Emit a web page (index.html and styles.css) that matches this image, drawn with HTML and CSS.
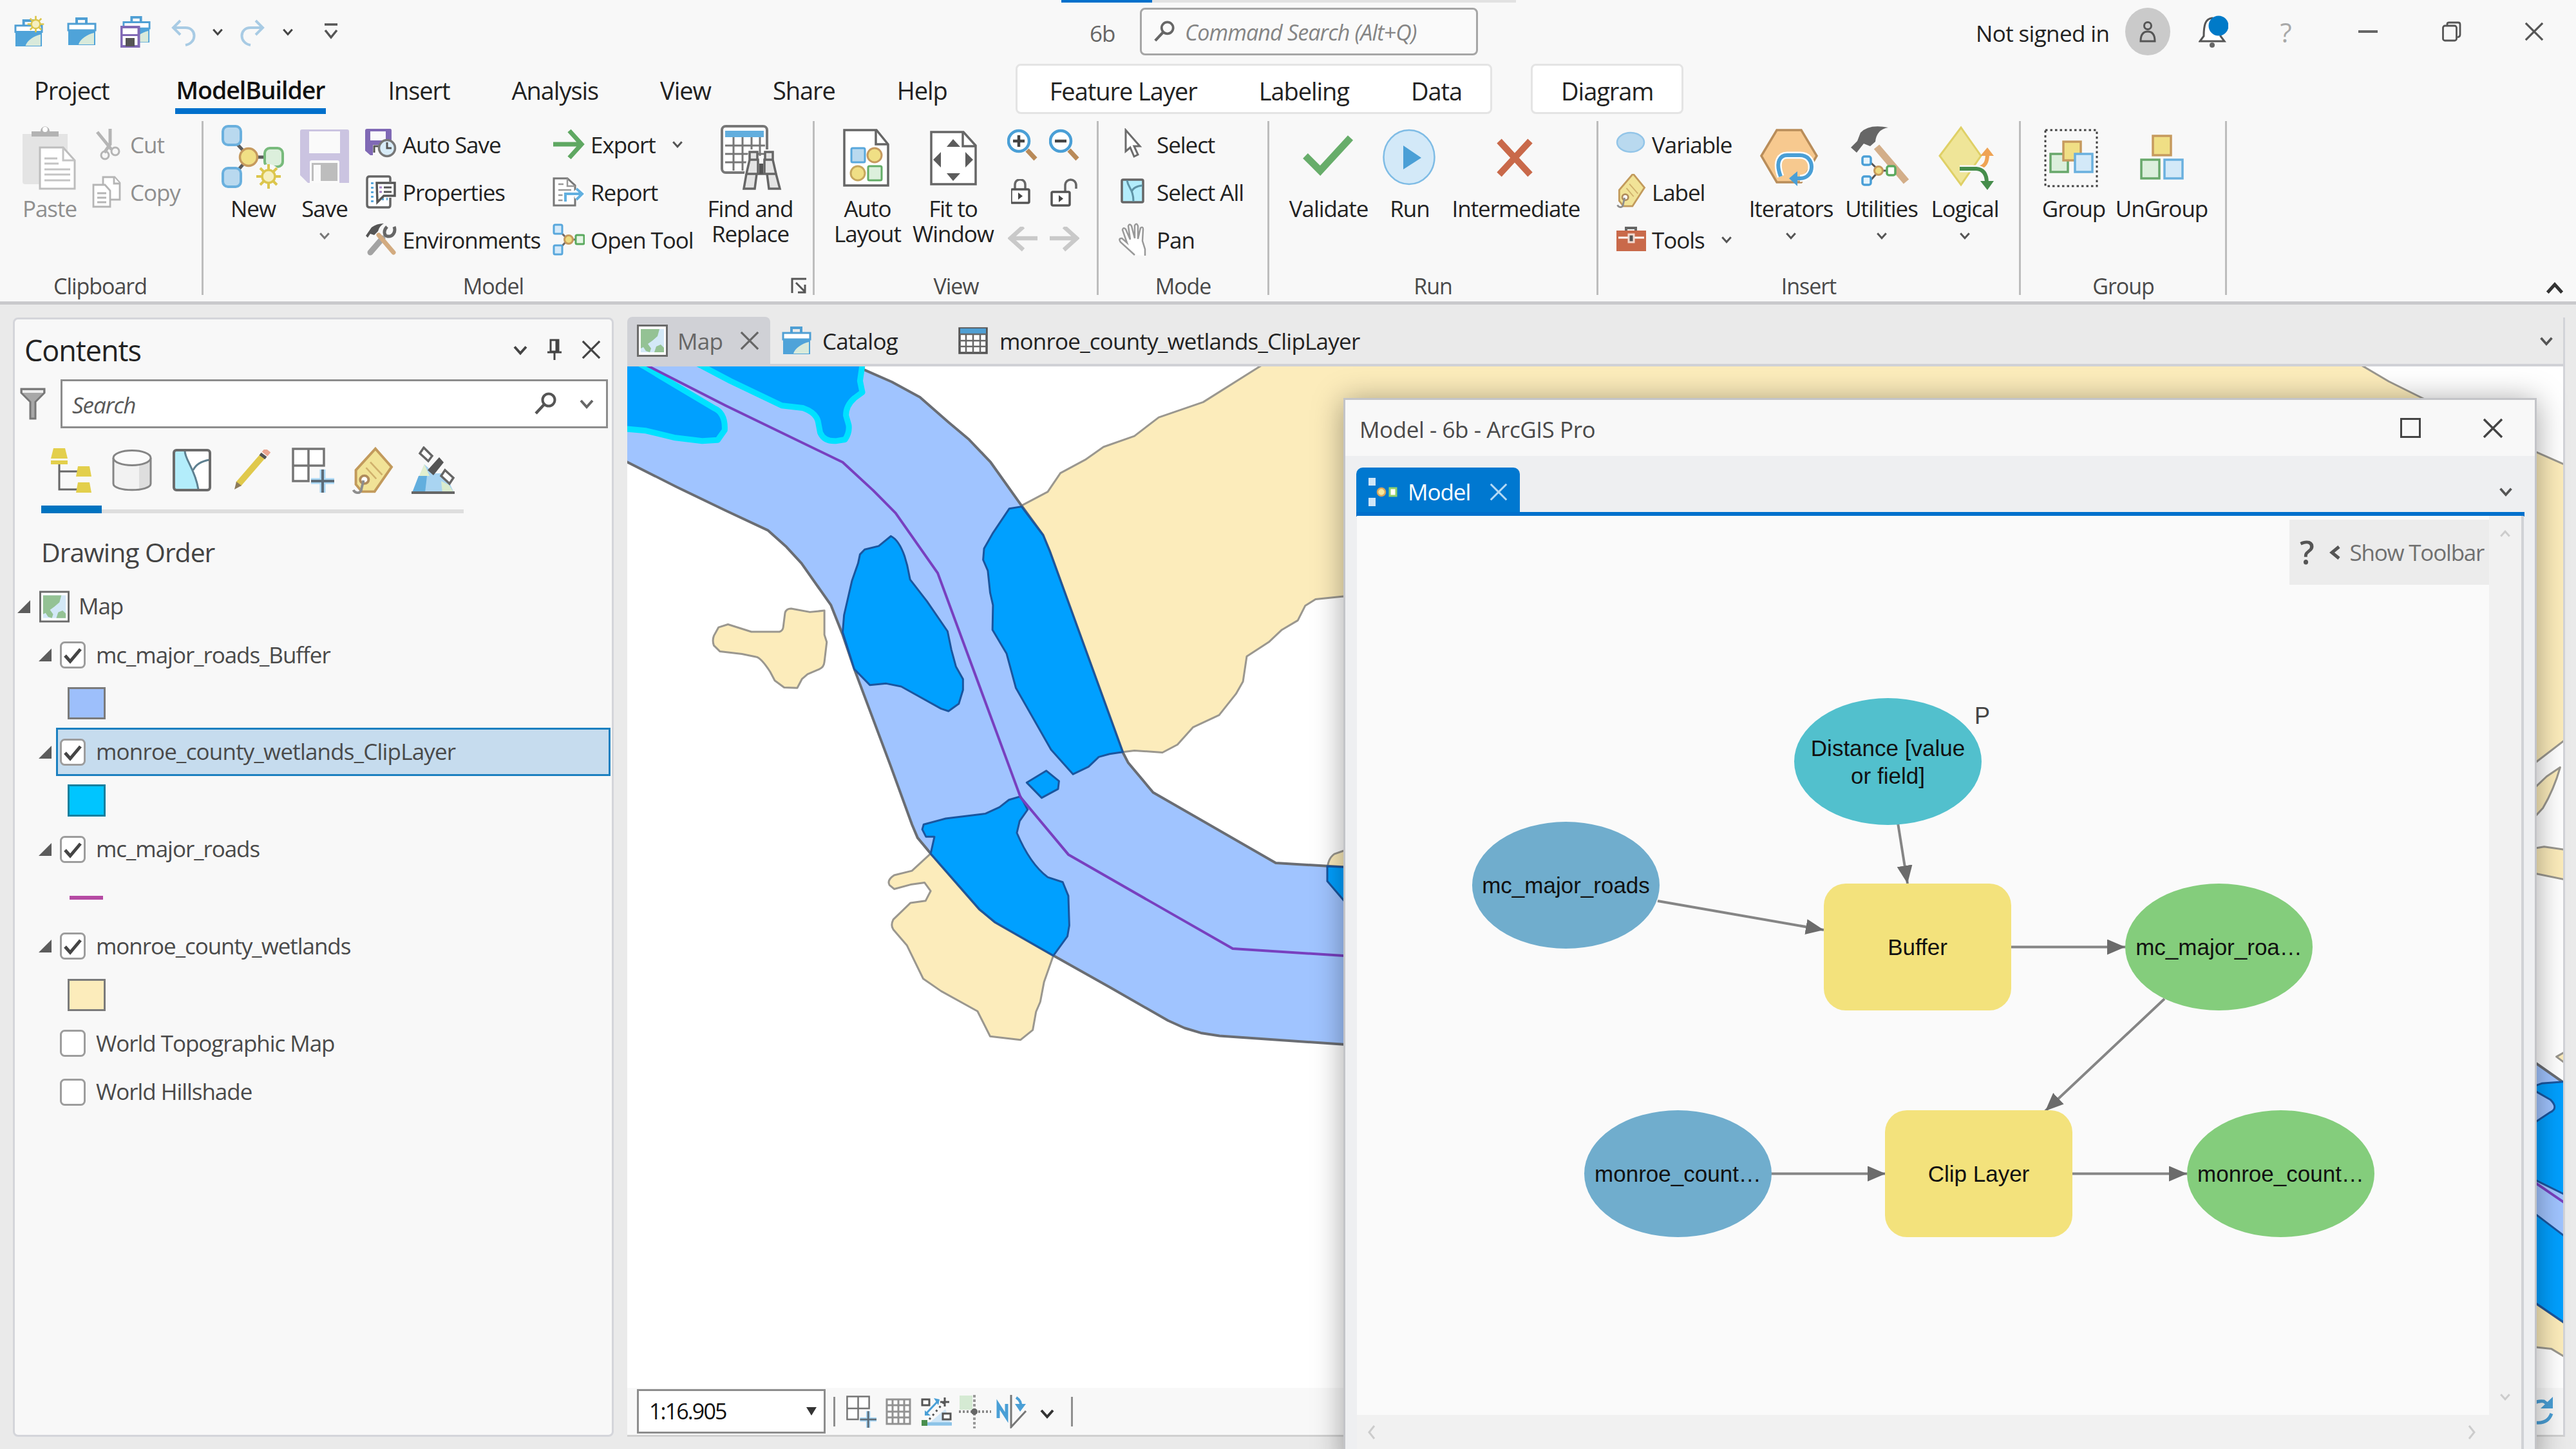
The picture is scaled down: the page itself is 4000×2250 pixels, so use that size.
FILE: index.html
```html
<!DOCTYPE html>
<html lang="en">
<head>
<meta charset="utf-8">
<title>6b - ArcGIS Pro</title>
<link rel="stylesheet" href="styles.css">
</head>
<body>
<svg class="defs" aria-hidden="true">
  <defs>
    <symbol id="chev" viewBox="0 0 24 16"><path d="M3 3l9 10 9-10" fill="none" stroke="currentColor" stroke-width="4"/></symbol>
    <symbol id="cross" viewBox="0 0 32 32"><path d="M2 2l28 28M30 2L2 30" fill="none" stroke="currentColor" stroke-width="3.4"/></symbol>
    <symbol id="lens" viewBox="0 0 36 36"><circle cx="23" cy="12" r="9.500" fill="none" stroke="currentColor" stroke-width="4"/><path d="M16 19L3 33" stroke="currentColor" stroke-width="4.500"/></symbol>
    <symbol id="sun" viewBox="0 0 40 40"><path d="M20 1v38M1 20h38M7 7l26 26M33 7L7 33" stroke="#dcc64d" stroke-width="4"/><circle cx="20" cy="20" r="10" fill="#f5efc0" stroke="#dcc64d" stroke-width="3.500"/></symbol>
    <symbol id="tree" viewBox="0 0 20 20"><path d="M20 0v20H0z" fill="#5c5c5c"/></symbol>
    <symbol id="maptile" viewBox="0 0 48 50"><rect x="1.500" y="1.500" width="45" height="47" fill="#fff" stroke="#6b6b6b" stroke-width="3"/><rect x="6" y="7" width="36" height="36" fill="#d3e8f7"/><path d="M6 7h29l-3 11-8 7-7 5 5 7-2 6-6-2-4-6-4 2z" fill="#94c294"/><path d="M27 43l3-9 7-3 5 5v7z" fill="#94c294"/></symbol>
    <symbol id="case" viewBox="0 0 46 46"><path d="M15 12V3h15v9" fill="none" stroke="#4f9fd4" stroke-width="4"/><path d="M2 11h42v10H2z" fill="#fff" stroke="#4f9fd4" stroke-width="3"/><path d="M2 20h42v24H2z" fill="#4fa3d9"/><path d="M18 43c2-8 14-16 24-18v18z" fill="#d9eadb"/></symbol>
    <symbol id="nodes" viewBox="0 0 50 50"><path d="M8 9l16 16L8 42M26 25h14" fill="none" stroke="#6b6b6b" stroke-width="3"/><rect x="2" y="2" width="13" height="14" rx="2" fill="#d5eafa" stroke="#58a7dc" stroke-width="3"/><rect x="2" y="34" width="13" height="14" rx="2" fill="#d5eafa" stroke="#58a7dc" stroke-width="3"/><circle cx="25" cy="25" r="6.500" fill="#eddc80" stroke="#c79a5c" stroke-width="3"/><rect x="36" y="18" width="13" height="14" rx="2" fill="#e6f5e6" stroke="#5aa95e" stroke-width="3"/></symbol>
    <symbol id="tag" viewBox="0 0 50 60"><path d="M28 3l19 23-20 31H12L5 48V30z" fill="#f1e397" stroke="#c29a5c" stroke-width="3"/><circle cx="15" cy="42" r="5" fill="#fff" stroke="#b08c5c" stroke-width="3"/><path d="M22 20l14 16M17 27l12 14" stroke="#d0b06c" stroke-width="2"/><path d="M14 43l-3 13c-2 4-7 3-9-1" fill="none" stroke="#8d8d8d" stroke-width="3"/></symbol>
    <symbol id="gridplus" viewBox="0 0 66 70"><path d="M2 2h48v26H2zM26 2v50H2V2M2 28h48" fill="#fff" stroke="#757575" stroke-width="3.500"/><path d="M48 34v36M30 52h36" stroke="#a9d7f5" stroke-width="9"/><path d="M48 34v36M30 52h36" stroke="#5d6c78" stroke-width="4"/></symbol>
    <symbol id="check" viewBox="0 0 40 42"><rect x="1.500" y="1.500" width="37" height="39" rx="6" fill="#fff" stroke="#9d9d9d" stroke-width="3"/><path d="M8 22l8 9 16-19" fill="none" stroke="#454545" stroke-width="5"/></symbol>
    <symbol id="nocheck" viewBox="0 0 40 42"><rect x="1.500" y="1.500" width="37" height="39" rx="6" fill="#fff" stroke="#9d9d9d" stroke-width="3"/></symbol>
  </defs>
</svg>

<div class="app">
  <header class="titlebar">
    <span class="cell"><svg width="48" height="50" viewBox="0 0 48 50"><use href="#case" x="0" y="5" width="45" height="45"/><use href="#sun" x="20" y="0" width="27" height="27"/></svg></span>
    <span class="cell"><svg width="48" height="46"><use href="#case" width="46" height="46"/></svg></span>
    <span class="cell"><svg width="48" height="50" viewBox="0 0 48 50"><use href="#case" x="3" y="0" width="44" height="44"/><rect x="1.500" y="18" width="27" height="30" fill="#fff" stroke="#8069b5" stroke-width="4"/><rect x="7" y="20" width="16" height="10" fill="#fff"/><path d="M1 32h27v-3H1z" fill="#8069b5"/><rect x="8" y="35" width="14" height="13" fill="#555"/></svg></span>
    <span class="cell undo"><svg width="40" height="42" viewBox="0 0 40 42" fill="none" stroke="#a8cbe4" stroke-width="4"><path d="M14 2L3 13l11 11M4 13h18c18 0 18 24 0 27"/></svg></span>
    <span class="cell"><svg width="18" height="13" color="#444"><use href="#chev"/></svg></span>
    <span class="cell undo"><svg width="40" height="42" viewBox="0 0 40 42" fill="none" stroke="#a8cbe4" stroke-width="4"><path d="M26 2l11 11-11 11M36 13H18C0 13 0 37 18 40"/></svg></span>
    <span class="cell"><svg width="18" height="13" color="#444"><use href="#chev"/></svg></span>
    <span class="cell"><svg width="24" height="26" viewBox="0 0 24 26" fill="none" stroke="#555" stroke-width="3.500"><path d="M2 2h20M3 11l9 11 9-11"/></svg></span>
    <span class="proj">6b</span>
    <div class="cmd"><svg width="34" height="34" color="#666"><use href="#lens"/></svg><span>Command Search (Alt+Q)</span></div>
    <span class="signin">Not signed in</span>
    <span class="cell"><span class="avatar"><svg width="26" height="34" viewBox="0 0 26 34" fill="none" stroke="#555" stroke-width="3"><circle cx="13" cy="8" r="5.500"/><path d="M2 32c0-10 4-15 11-15s11 5 11 15z"/></svg></span></span>
    <span class="cell"><svg width="46" height="50" viewBox="0 0 46 50"><path d="M2 40h38l-6-8c0-16-2-27-13-28C10 5 8 16 8 32z" fill="#fff" stroke="#555" stroke-width="3"/><circle cx="21" cy="46" r="4" fill="#666"/><circle cx="31" cy="16" r="15.500" fill="#007ac8"/></svg></span>
    <span class="cell help">?</span>
    <span class="cell"><svg width="30" height="4"><rect width="30" height="4" fill="#666"/></svg></span>
    <span class="cell"><svg width="30" height="32" viewBox="0 0 30 32" fill="none" stroke="#555" stroke-width="2.800"><rect x="1.500" y="7" width="21" height="23" rx="3"/><path d="M8 6V4q0-2 3-2h14q3 0 3 3v16q0 3-4 4"/></svg></span>
    <span class="cell close"><svg width="30" height="32" color="#555"><use href="#cross"/></svg></span>
    <i class="progress"></i>
  </header>

  <nav class="tabs">
    <span>Project</span><span class="on">ModelBuilder</span><span>Insert</span><span>Analysis</span><span>View</span><span>Share</span><span>Help</span>
    <div class="ctx"><span>Feature Layer</span><span>Labeling</span><span>Data</span></div>
    <div class="ctx two"><span>Diagram</span></div>
  </nav>

  <section class="ribbon">
    <div class="group g-clip">
      <div class="tools">
        <div class="big off w130"><svg width="100" height="110" viewBox="0 0 100 110"><path d="M8 20h70v78H12q-4 0-4-4z" fill="#e4e4e4"/><path d="M22 24v-8h14c0-10 14-10 14 0h14v8z" fill="#b3b3b3"/><circle cx="43" cy="13" r="4" fill="#fff"/><path d="M35 41h36l18 20v44H35z" fill="#fff" stroke="#bdbdbd" stroke-width="3"/><path d="M71 41v20h18M42 58h20M42 66h22M42 75h40M42 83h40M42 92h40" fill="none" stroke="#c4c4c4" stroke-width="3"/></svg><span>Paste</span></div>
        <div class="col off">
          <div class="row"><svg width="50" height="50" viewBox="0 0 50 50" fill="none" stroke="#b5b5b5" stroke-width="3"><path d="M8 6l22 27M28 1v24l-9 13" stroke-width="5"/><circle cx="36" cy="36" r="6"/><circle cx="20" cy="42" r="6"/></svg>Cut</div>
          <div class="row"><svg width="50" height="50" viewBox="0 0 50 50" fill="#fff" stroke="#b5b5b5" stroke-width="2.800"><path d="M17 2h18l8 9v26H17z"/><path d="M2 14h18l8 9v25H2z"/><path d="M8 27h14M8 34h14M8 41h14M34 2v10h9"/></svg>Copy</div>
        </div>
      </div>
      <div class="name">Clipboard</div>
    </div>

    <div class="group g-model">
      <div class="tools">
        <div class="big w100"><svg width="100" height="110" viewBox="0 0 100 110"><path d="M20 30l24 26L20 84M44 56h30" fill="none" stroke="#5c5c5c" stroke-width="5"/><rect x="3" y="8" width="28" height="29" rx="8" fill="#b9d9ef" stroke="#6ab0de" stroke-width="4"/><rect x="3" y="73" width="28" height="29" rx="8" fill="#b9d9ef" stroke="#6ab0de" stroke-width="4"/><circle cx="43" cy="56" r="13.500" fill="#f0df85" stroke="#c69a5e" stroke-width="3.500"/><rect x="68" y="42" width="28" height="29" rx="8" fill="#dcefdc" stroke="#78ba7c" stroke-width="4"/><circle cx="74" cy="86" r="19" fill="#f8f8f8"/><use href="#sun" x="54" y="66" width="40" height="40"/></svg><span>New</span></div>
        <div class="big w122"><svg width="100" height="110" viewBox="0 0 100 110"><path d="M12 16q0-3 3-3h70q3 0 3 3v80H24L12 84z" fill="#cbc4e1"/><rect x="26" y="16" width="48" height="34" fill="#fafafa"/><path d="M27 96V64q0-3 3-3h40q3 0 3 3v32z" fill="#fafafa"/><rect x="30" y="65" width="40" height="28" fill="#bdbdbd"/><rect x="33" y="68" width="11" height="25" fill="#fafafa"/></svg><span>Save</span><svg class="dd" width="18" height="14" color="#777"><use href="#chev"/></svg></div>
        <div class="col w295">
          <div class="row"><svg width="50" height="50" viewBox="0 0 50 50"><path d="M1 4q0-3 3-3h36q2 0 2 3v30H24v8H9l-8-7z" fill="#8069b5"/><rect x="9" y="5" width="24" height="14" fill="#fafafa"/><path d="M13 42V26h18v16z" fill="#fafafa"/><path d="M15 38V28h10" fill="none" stroke="#555" stroke-width="3"/><circle cx="35" cy="31" r="12.500" fill="#d8ecf8" stroke="#777" stroke-width="3.500"/><path d="M35 22v9h7" fill="none" stroke="#555" stroke-width="3"/></svg>Auto Save</div>
          <div class="row"><svg width="50" height="52" viewBox="0 0 50 52"><path d="M40 10V5q0-3-3-3H8Q4 2 4 6v40q0 4 4 4h29q3 0 3-4V35" fill="#fff" stroke="#666" stroke-width="3.500"/><path d="M12 11v32M27 37h9" stroke="#58a7dc" stroke-width="4" stroke-dasharray="3 4"/><path d="M19 12h28v20H30L20 42z" fill="#fff" stroke="#555" stroke-width="3.500"/><path d="M30 19h12M30 26h12" stroke="#555" stroke-width="3"/><path d="M23 19h4M23 26h4" stroke="#a37fc4" stroke-width="3"/></svg>Properties</div>
          <div class="row"><svg width="50" height="52" viewBox="0 0 50 52"><path d="M28 24L9 46" stroke="#a3a3a3" stroke-width="9" stroke-linecap="round"/><path d="M46 6c3 8-2 16-10 15-6-1-7-9-1-15" fill="none" stroke="#666" stroke-width="5"/><path d="M22 19l23 27" stroke="#d3ab80" stroke-width="7" stroke-linecap="round"/><path d="M2 20l9-13q8-6 19-6-7 4-9 12l-6 6-6-2-4 6z" fill="#555"/></svg>Environments</div>
        </div>
        <div class="col w226">
          <div class="row"><svg width="50" height="50" viewBox="0 0 50 50"><path d="M1 25h43M26 4l19 21-19 21" fill="none" stroke="#5fa862" stroke-width="7"/></svg>Export<svg class="side" width="18" height="14" color="#555"><use href="#chev"/></svg></div>
          <div class="row"><svg width="50" height="50" viewBox="0 0 50 50"><path d="M2 4h21l12 11v31H2z" fill="#fff" stroke="#777" stroke-width="3"/><path d="M23 4v12h12M9 13h8M9 22h20M9 30h15M9 38h14" fill="none" stroke="#999" stroke-width="2.500"/><path d="M20 40V28h24M37 20l9 8-9 9" fill="none" stroke="#fff" stroke-width="9"/><path d="M20 40V28h24M37 20l9 8-9 9" fill="none" stroke="#62b0e0" stroke-width="4"/></svg>Report</div>
          <div class="row"><svg width="50" height="50"><use href="#nodes"/></svg>Open Tool</div>
        </div>
        <div class="big w160"><svg width="100" height="110" viewBox="0 0 100 110"><rect x="6" y="8" width="70" height="72" rx="6" fill="#fff" stroke="#777" stroke-width="4"/><rect x="11" y="15" width="60" height="10" fill="#62aede"/><path d="M11 38h62M11 51h62M11 64h62M24 25v52M38 25v52M52 25v52M65 25v52" stroke="#777" stroke-width="3"/><path d="M44 62l4-18h14v10h10V44h14l4 18 9 44H76V84H60v22H37z" fill="#f8f8f8"/><path d="M49 60V48h12v12M73 60V48h12v12M49 60h13v22h10V60h13l5 22H44zM44 82l-4 23h17l3-23M90 82l6 23H79l-3-23" fill="#e4e4e4" stroke="#666" stroke-width="3.500"/><path d="M64 66h6v16h-6z" fill="#555"/></svg><span>Find and<br>Replace</span></div>
      </div>
      <div class="name launch">Model<svg width="26" height="26" viewBox="0 0 26 26" fill="none" stroke="#555" stroke-width="3"><path d="M2 24V2h22M8 8l14 14M22 11v12H11"/></svg></div>
    </div>

    <div class="group g-view">
      <div class="tools">
        <div class="big w134"><svg width="100" height="110" viewBox="0 0 100 110"><path d="M14 14h50l18 22v64H14z" fill="#fff" stroke="#666" stroke-width="3.500"/><path d="M63 14v22h19" fill="none" stroke="#666" stroke-width="3.500"/><rect x="25" y="42" width="21" height="22" rx="2" fill="#b9d9ef" stroke="#58a7dc" stroke-width="3"/><circle cx="61" cy="53" r="11" fill="#f0df85" stroke="#c69a5e" stroke-width="3"/><circle cx="35" cy="81" r="11" fill="#f0df85" stroke="#c6a75e" stroke-width="3"/><rect x="51" y="70" width="21" height="22" rx="2" fill="#dcf0dc" stroke="#63ad67" stroke-width="3"/></svg><span>Auto<br>Layout</span></div>
        <div class="big w132"><svg width="100" height="110" viewBox="0 0 100 110"><path d="M16 17h50l19 21v60H16z" fill="#fff" stroke="#666" stroke-width="3.500"/><path d="M65 17v22h20" fill="none" stroke="#666" stroke-width="3.500"/><path d="M40 40h21L50 28zM40 81h21L50 93zM31 48v24L19 60zM69 48v24l12-12z" fill="#5c5c5c"/></svg><span>Fit to<br>Window</span></div>
        <div class="pairs">
          <svg width="48" height="52" viewBox="0 0 48 52"><path d="M31 34l13 14" stroke="#b98a58" stroke-width="7"/><circle cx="18" cy="20" r="16" fill="#fff" stroke="#4a9fd6" stroke-width="4.500"/><path d="M18 11v18M9 20h18" stroke="#444" stroke-width="4.500"/></svg>
          <svg width="48" height="52" viewBox="0 0 48 52"><path d="M31 34l13 14" stroke="#b98a58" stroke-width="7"/><circle cx="18" cy="20" r="16" fill="#fff" stroke="#4a9fd6" stroke-width="4.500"/><path d="M9 20h18" stroke="#444" stroke-width="4.500"/></svg>
          <svg width="36" height="42" viewBox="2 2 36 42"><path d="M8 18V11c0-11 16-11 16 0v7" fill="none" stroke="#666" stroke-width="3.500"/><rect x="2" y="18" width="28" height="21" rx="2" fill="#fff" stroke="#555" stroke-width="3.500"/><path d="M13 23v11l7-5.500z" fill="#444"/></svg>
          <svg width="44" height="46" viewBox="0 0 44 46"><path d="M23 21v-9c0-12 17-12 17 0v5" fill="none" stroke="#666" stroke-width="3.500"/><rect x="2" y="22" width="28" height="21" rx="2" fill="#fff" stroke="#555" stroke-width="3.500"/><path d="M13 27v11l7-5.500z" fill="#444"/></svg>
          <svg width="46" height="42" viewBox="0 3 46 42"><path d="M46 21H5M24 3L4 21l20 18" fill="none" stroke="#c9c9c9" stroke-width="6.500"/></svg>
          <svg width="46" height="42" viewBox="0 3 46 42"><path d="M0 21h41M22 3l20 18-20 18" fill="none" stroke="#c9c9c9" stroke-width="6.500"/></svg>
        </div>
      </div>
      <div class="name">View</div>
    </div>

    <div class="group g-mode">
      <div class="tools">
        <div class="col">
          <div class="row"><svg width="50" height="50" viewBox="2 0 50 50"><path d="M13 3v33l7-6 6 14 6-3-6-13h9z" fill="#fff" stroke="#6c6c6c" stroke-width="3"/></svg>Select</div>
          <div class="row"><svg width="50" height="50" viewBox="3 0 50 50"><rect x="8" y="6" width="33" height="35" rx="2" fill="#b3edfb" stroke="#666" stroke-width="3.500"/><path d="M16 7c2 12 10 14 10 33M23 25c2-6 8-9 17-10" fill="none" stroke="#5e93a5" stroke-width="3"/></svg>Select All</div>
          <div class="row"><svg width="50" height="54" viewBox="4 0 50 54"><path d="M29 51L7 31q-4-6 2-6l8 7-7-20q1-5 5-1l7 16L19 6q2-5 5 0l5 19V5q3-5 5 1v20l4-17q4-3 4 2l-1 18 4 13v10" fill="#fff" stroke="#999" stroke-width="2.500"/></svg>Pan</div>
        </div>
      </div>
      <div class="name">Mode</div>
    </div>

    <div class="group g-run">
      <div class="tools">
        <div class="big w126"><svg width="100" height="110" viewBox="0 0 100 110"><path d="M14 54l23 23L84 26" fill="none" stroke="#67ad6a" stroke-width="11"/></svg><span>Validate</span></div>
        <div class="big w126"><svg width="100" height="110" viewBox="0 0 100 110"><ellipse cx="49" cy="56" rx="39.500" ry="42" fill="#d3e9f8" stroke="#7fbce5" stroke-width="2.500"/><path d="M40 38v37l28-18z" fill="#4a9fd6"/></svg><span>Run</span></div>
        <div class="big w204"><svg width="100" height="110" viewBox="0 0 100 110"><path d="M24 31l48 52M72 31L24 83" fill="none" stroke="#c9694a" stroke-width="10"/></svg><span>Intermediate</span></div>
      </div>
      <div class="name">Run</div>
    </div>

    <div class="group g-insert">
      <div class="tools">
        <div class="col w206">
          <div class="row"><svg width="50" height="50" viewBox="-2 0 50 50"><ellipse cx="24" cy="22" rx="21" ry="15" fill="#b9d9ef" stroke="#93c5e8" stroke-width="2.500"/></svg>Variable</div>
          <div class="row"><svg width="50" height="56" viewBox="-3 3 50 56"><use href="#tag" width="48" height="56"/></svg>Label</div>
          <div class="row"><svg width="50" height="50" viewBox="-2 0 50 50"><path d="M17 14V7h15v7" fill="none" stroke="#666" stroke-width="4"/><rect x="2" y="11" width="46" height="32" fill="#c9694a"/><path d="M5 22h40" stroke="#fff" stroke-width="3"/><rect x="21" y="17" width="8" height="12" fill="#555" stroke="#f4d9cf" stroke-width="3"/></svg>Tools<svg class="side" width="18" height="14" color="#555"><use href="#chev"/></svg></div>
        </div>
        <div class="big w140"><svg width="100" height="110" viewBox="0 0 100 110"><path d="M4 54l24-40h38l24 40-24 41H28z" fill="#f7c98f" stroke="#b98d5a" stroke-width="3.500"/><path d="M34 86c-9-24 0-33 10-33h20c24 0 24 36 0 36" fill="none" stroke="#fff" stroke-width="11"/><path d="M34 86c-9-24 0-33 10-33h20c24 0 24 36 0 36H56" fill="none" stroke="#4a9fd6" stroke-width="6"/><path d="M60 78v23L47 89z" fill="#4a9fd6"/></svg><span>Iterators</span><svg class="dd" width="18" height="14" color="#555"><use href="#chev"/></svg></div>
        <div class="big w141"><svg width="100" height="110" viewBox="0 0 100 110"><path d="M42 40l46 54" stroke="#d3ae89" stroke-width="11"/><path d="M2 41l10-10 5-13Q30 4 60 10q-18 3-20 22l-8 7-10-4-4 5-7 9z" fill="#666"/><path d="M28 60l18 17-18 20M46 77h18" fill="none" stroke="#555" stroke-width="3"/><rect x="20" y="55" width="13" height="13" rx="3" fill="#e7f4fc" stroke="#4a9fd6" stroke-width="3.500"/><rect x="20" y="86" width="13" height="13" rx="3" fill="#e7f4fc" stroke="#4a9fd6" stroke-width="3.500"/><circle cx="45" cy="77" r="6.500" fill="#eddc80" stroke="#c79a5c" stroke-width="3"/><rect x="58" y="70" width="13" height="14" rx="3" fill="#fff" stroke="#5aa95e" stroke-width="3.500"/></svg><span>Utilities</span><svg class="dd" width="18" height="14" color="#555"><use href="#chev"/></svg></div>
        <div class="big w118"><svg width="100" height="110" viewBox="0 0 100 110"><path d="M11 54l33-44 31 44-31 45z" fill="#efe598" stroke="#dfd066" stroke-width="3"/><path d="M44 73h26c12-2 15-10 15-22" fill="none" stroke="#efa354" stroke-width="6"/><path d="M74 54h21L85 41z" fill="#efa354"/><path d="M42 74h26c12 1 16 10 16 22" fill="none" stroke="#f8f8f8" stroke-width="11"/><path d="M42 74h26c12 1 16 10 16 22" fill="none" stroke="#468d4b" stroke-width="6"/><path d="M74 93h21l-10 14z" fill="#468d4b"/></svg><span>Logical</span><svg class="dd" width="18" height="14" color="#555"><use href="#chev"/></svg></div>
      </div>
      <div class="name">Insert</div>
    </div>

    <div class="group g-group">
      <div class="tools">
        <div class="big w134"><svg width="100" height="110" viewBox="0 0 100 110"><rect x="6" y="14" width="80" height="87" fill="none" stroke="#444" stroke-width="3" stroke-dasharray="3.500 4"/><rect x="14" y="51" width="27" height="28" fill="#dcefdc" stroke="#68a86b" stroke-width="3.500"/><rect x="34" y="32" width="27" height="29" fill="#f0df85" stroke="#c69a5e" stroke-width="3.500"/><rect x="52" y="51" width="27" height="28" fill="#d3e9f8" stroke="#6ab0de" stroke-width="3.500"/></svg><span>Group</span></div>
        <div class="big w139"><svg width="100" height="110" viewBox="0 0 100 110"><rect x="36" y="23" width="28" height="30" fill="#f0df85" stroke="#c69a5e" stroke-width="3.500"/><rect x="18" y="60" width="28" height="29" fill="#dcefdc" stroke="#68a86b" stroke-width="3.500"/><rect x="54" y="60" width="28" height="29" fill="#d3e9f8" stroke="#6ab0de" stroke-width="3.500"/></svg><span>UnGroup</span></div>
      </div>
      <div class="name">Group</div>
    </div>
    <svg class="collapse" width="30" height="20" color="#333"><use href="#chev" transform="rotate(180 15 10)"/></svg>
  </section>

  <main class="work">
    <aside class="contents">
      <div class="phead"><span class="ptitle">Contents</span>
        <svg width="24" height="17" color="#444"><use href="#chev"/></svg>
        <svg class="pin" width="24" height="34" viewBox="0 0 24 34" fill="none" stroke="#444" stroke-width="3"><path d="M6 2h12v18H6zM1 21h22M12 21v12"/><path d="M16 3v17" stroke-width="5"/></svg>
        <svg width="30" height="30" color="#444"><use href="#cross"/></svg>
      </div>
      <div class="psearch">
        <svg width="40" height="50" viewBox="0 0 40 50"><path d="M2 2h36v6L24 22v26h-8V22L2 8z" fill="#a8a8a8" stroke="#777" stroke-width="3"/><path d="M4 4h32v4H4z" fill="#eee"/></svg>
        <div class="box"><span>Search</span><svg width="36" height="36" color="#555"><use href="#lens"/></svg><svg width="24" height="16" color="#666"><use href="#chev"/></svg></div>
      </div>
      <div class="views">
        <span class="on"><svg width="64" height="72" viewBox="0 0 64 72"><path d="M13 26v40h30M13 38h30" fill="none" stroke="#666" stroke-width="3"/><path d="M4 2h18l4 16H0zM0 21h26v6H0zM42 30h18l3 16H39zM42 55h18l3 16H39z" fill="#e3cf4c"/></svg></span>
        <span><svg width="62" height="66" viewBox="0 0 62 66"><path d="M2 14v40c0 13 58 13 58 0V14" fill="#f2f2f2"/><path d="M42 24v39q18-3 18-9V14z" fill="#dedede"/><path d="M2 14v40c0 13 58 13 58 0V14" fill="none" stroke="#858585" stroke-width="3"/><ellipse cx="31" cy="14" rx="29" ry="11.500" fill="#fbfbfb" stroke="#858585" stroke-width="3"/></svg></span>
        <span><svg width="60" height="66" viewBox="0 0 60 66"><rect x="2" y="2" width="56" height="62" rx="4" fill="#fff"/><path d="M3 3h16c0 14 16 28 21 60H3z" fill="#b3edfb"/><path d="M19 3c0 14 16 28 21 60M32 33c4-9 14-14 25-16" fill="none" stroke="#5e8090" stroke-width="3"/><rect x="2" y="2" width="56" height="62" rx="4" fill="none" stroke="#6b6b6b" stroke-width="4"/></svg></span>
        <span><svg width="60" height="64" viewBox="0 0 60 64"><path d="M8 54L47 9" stroke="#e0c94c" stroke-width="10"/><path d="M45 12l3-4" stroke="#555" stroke-width="11"/><path d="M49 7l5-6" stroke="#eba691" stroke-width="11"/><path d="M2 62l3-12 8 6z" fill="#8c7a5a"/></svg></span>
        <span><svg width="66" height="72"><use href="#gridplus"/></svg></span>
        <span><svg width="66" height="74" viewBox="0 0 50 60" preserveAspectRatio="none"><use href="#tag" width="50" height="60"/></svg></span>
        <span><svg width="68" height="74" viewBox="0 0 68 74"><path d="M1 72L20 28l16 14h16l14 30z" fill="#a9d4f1"/><path d="M1 72l10-26h13l-3 26z" fill="#62aede"/><path d="M20 28l8 18H12z" fill="#e2efce"/><path d="M48 72l-2-18 12 6 8 12z" fill="#d9ebce"/><path d="M0 72h67" stroke="#666" stroke-width="4"/><path d="M43 17l7 8-16 20-9-8z" fill="#555"/><path d="M19 2l13 13-6 8-13-12zM52 37l13 12-6 9-13-12z" fill="#fff" stroke="#666" stroke-width="3.500"/></svg></span>
      </div>
      <h2>Drawing Order</h2>
      <ul class="toc">
        <li class="root"><svg width="20" height="20"><use href="#tree"/></svg><svg width="47" height="50"><use href="#maptile"/></svg><span>Map</span></li>
        <li><svg class="tw" width="20" height="20"><use href="#tree"/></svg><div class="item"><svg width="40" height="42"><use href="#check"/></svg><span>mc_major_roads_Buffer</span></div></li>
        <li class="sym"><i class="sw lilac"></i></li>
        <li><svg class="tw" width="20" height="20"><use href="#tree"/></svg><div class="item sel"><svg width="40" height="42"><use href="#check"/></svg><span>monroe_county_wetlands_ClipLayer</span></div></li>
        <li class="sym"><i class="sw cyan"></i></li>
        <li><svg class="tw" width="20" height="20"><use href="#tree"/></svg><div class="item"><svg width="40" height="42"><use href="#check"/></svg><span>mc_major_roads</span></div></li>
        <li class="sym"><i class="ln"></i></li>
        <li><svg class="tw" width="20" height="20"><use href="#tree"/></svg><div class="item"><svg width="40" height="42"><use href="#check"/></svg><span>monroe_county_wetlands</span></div></li>
        <li class="sym"><i class="sw sand"></i></li>
        <li><span class="tw"></span><div class="item"><svg width="40" height="42"><use href="#nocheck"/></svg><span>World Topographic Map</span></div></li>
        <li><span class="tw"></span><div class="item"><svg width="40" height="42"><use href="#nocheck"/></svg><span>World Hillshade</span></div></li>
      </ul>
    </aside>

    <section class="mapview">
      <div class="mtabs">
        <span class="mtab on"><svg width="48" height="50"><use href="#maptile"/></svg><b>Map</b><svg class="x" width="30" height="30" color="#666"><use href="#cross"/></svg></span>
        <span class="mtab cat"><svg width="46" height="46"><use href="#case"/></svg><b>Catalog</b></span>
        <span class="mtab tbl"><svg width="46" height="42" viewBox="0 0 46 42"><rect x="2" y="2" width="42" height="38" fill="#fff" stroke="#555" stroke-width="3.500"/><rect x="3" y="2" width="40" height="8" fill="#4f9fd4"/><path d="M2 11h42M2 21h42M2 30h42M12 11v29M23 11v29M34 11v29" stroke="#666" stroke-width="2.500"/></svg><b>monroe_county_wetlands_ClipLayer</b></span>
        <svg class="more" width="24" height="15" color="#555"><use href="#chev"/></svg>
      </div>
      <svg class="map" width="3006" height="1586" viewBox="974.500 568.500 3006 1586">
        <g transform="translate(960 480) scale(.72706 .76528)" class="shapes">
          <g class="wet">
            <path d="M1372 115L1250 188 1155 219 1103 257 1037 279 998 305 945 332 918 370 862 398 1078 898 1103 895 1163 899 1195 883 1228 848 1284 823 1320 780 1335 755 1343 704 1390 675 1418 650 1452 631 1468 601 1490 588 1550 582 2000 1000 4096 919 4170 865V320L4096 289 3854 180 3782 146 3700 100H1390z"/>
            <path d="M668 1104L628 1139 590 1148Q574 1158 580 1168L590 1176 625 1167 655 1163 668 1180 657 1200 625 1204 588 1238Q582 1250 588 1258L617 1290 652 1358 690 1383 768 1424 795 1475 860 1482 886 1462 893 1425 902 1405 910 1365 930 1311 805 1243z"/>
            <path d="M235 639L285 654H345Q352 652 353 645L357 615Q360 607 370 607L410 614 441 611V660L446 675 441 715Q440 726 430 730L405 740 393 750 383 768 355 767 335 753 325 735Q305 706 295 705L265 699 218 694 205 682Q201 672 205 662L215 645z"/>
            <path d="M1560 1095L1530 1105Q1515 1115 1515 1140H1560z"/>
          </g>
          <path class="buf" d="M0 60H480L525 122 585 147 645 178 705 228 750 264 796 310 862 398 908 458 922 490 1078 898 1090 920 1143 980 1405 1123 1560 1132V1492L1285 1474 1245 1468 1210 1458 1175 1443 1050 1375 930 1311 805 1243 772 1217 668 1104 640 1072 628 1045 582 925 505 730 480 660 455 600 392 515 360 482 320 448 230 408 125 360 0 300z"/>
          <g class="clip">
            <path d="M583 460Q600 468 612 500L618 520 624 548 660 592 704 653 712 690 722 725 737 750V772L728 800 706 815 690 810 605 765 573 759 538 762 505 730 480 655 483 620 500 550 513 515 517 497 527 487 557 480z"/>
            <path d="M836 404L862 400 908 458 922 490 1078 898 1050 902 1027 908 1005 928 972 943 925 893 850 768 830 698 800 650 801 600 795 575 790 530 780 508 782 485 800 455z"/>
            <path d="M873 960L915 936 942 957 940 973 905 991z"/>
            <path d="M860 988L875 1015 858 1038 852 1062Q880 1125 918 1152L950 1162 962 1190 964 1250 960 1272 930 1311 805 1243 772 1217 668 1104 676 1070H658L650 1055 653 1045 700 1033 785 1023 815 1010 835 995z"/>
            <path d="M1515 1130V1160L1560 1210V1132z"/>
          </g>
          <g class="hot">
            <path d="M-10 80L55 115 120 152 205 200Q230 210 228 245L213 265 180 267 120 260 60 246-10 240z"/>
            <path d="M140 95L240 145 350 195 395 200Q425 210 428 230L432 250Q440 268 465 267L485 264Q495 250 493 235L487 215Q487 195 505 180L522 168 517 145 527 80z"/>
          </g>
          <path class="road" d="M30 98L65 115 230 195 345 248 480 310 545 367 593 413 683 535 860 990 962 1106 1140 1203 1313 1297 1560 1312"/>
        </g>
        <g transform="translate(3400 540) scale(.38265 1.0906)" class="shapes">
          <g class="wet">
            <path d="M1390 632L1405 625 1450 610 1505 597Q1480 628 1435 655L1390 672z"/>
            <path d="M1390 713L1440 710 1540 715V758L1390 747z"/>
            <path d="M1540 999L1490 1009 1540 1022z"/>
            <path d="M1390 1350L1540 1386V1440L1470 1425 1390 1422z"/>
          </g>
          <path class="buf" d="M1390 1014L1540 1051V1392L1390 1356z"/>
          <g class="clip">
            <path d="M1390 1052L1430 1047 1540 1044V1208L1390 1182V1106L1405 1102 1465 1088Q1500 1082 1465 1070L1405 1058z"/>
            <path d="M1390 1229L1540 1269V1392L1390 1356z"/>
          </g>
          <path class="road" d="M1390 1185L1540 1221"/>
        </g>
      </svg>
      <div class="status">
        <div class="scale"><span>1:16.905</span><svg width="16" height="14"><path d="M0 0h16L8 13z" fill="#333"/></svg></div>
        <i class="sep"></i>
        <svg class="s1" width="47" height="50"><use href="#gridplus"/></svg>
        <svg class="s2" width="40" height="42" viewBox="0 0 40 42"><path d="M2 2h36v38H2zM11 2v38M20 2v38M29 2v38M2 11h36M2 21h36M2 30h36" fill="#fff" stroke="#929292" stroke-width="3"/></svg>
        <svg class="s3" width="50" height="48" viewBox="0 0 50 48"><path d="M8 46h40L38 20z" fill="#cfe6f7"/><path d="M5 43h43" stroke="#8cc3e8" stroke-width="5"/><path d="M9 26L26 8" stroke="#4a9fd6" stroke-width="3"/><path d="M20 3l9 2-2 9zM6 22v8h9z" fill="#4a9fd6"/><path d="M13 36L36 9" stroke="#555" stroke-width="3" stroke-dasharray="3 5"/><rect x="2" y="5" width="11" height="9" fill="#fff" stroke="#555" stroke-width="3"/><rect x="34" y="27" width="12" height="9" fill="#fff" stroke="#555" stroke-width="3"/><rect x="1" y="37" width="9" height="9" fill="#4a8f4e"/><path d="M37 2v14M30 9h14" stroke="#555" stroke-width="3"/></svg>
        <svg class="s4" width="50" height="52" viewBox="0 0 50 52"><rect x="1" y="1" width="20" height="22" fill="#d5ead3"/><path d="M24 0v52" stroke="#999" stroke-width="4" stroke-dasharray="4 3"/><path d="M0 26h50" stroke="#888" stroke-width="4" stroke-dasharray="3 3"/><circle cx="24" cy="26" r="5" fill="#666"/></svg>
        <svg class="s5" width="50" height="52" viewBox="0 0 50 52"><path d="M3 36V15l13 20V14" fill="none" stroke="#4a9fd6" stroke-width="5"/><path d="M23 0v50l23-25" fill="none" stroke="#777" stroke-width="3"/><path d="M31 4q9 6 7 16" fill="none" stroke="#4a9fd6" stroke-width="4"/><path d="M29 14h17l-9 12z" fill="#4a9fd6"/></svg>
        <svg class="s6" width="24" height="16" color="#333"><use href="#chev"/></svg>
        <i class="sep"></i>
        <svg class="refresh" width="46" height="52" viewBox="0 0 46 52"><path d="M6 22q6-14 22-12l8 6M40 29q-6 16-24 14l-8-6" fill="none" stroke="#4a9fd6" stroke-width="5"/><path d="M42 3v18H23z" fill="#4a9fd6"/></svg>
      </div>
    </section>
  </main>

  <section class="window">
    <div class="wtitle"><span>Model - 6b - ArcGIS Pro</span>
      <svg class="max" width="32" height="32"><rect x="1.500" y="1.500" width="29" height="28" fill="none" stroke="#444" stroke-width="3"/></svg>
      <svg class="wx" width="32" height="32" color="#444"><use href="#cross"/></svg>
    </div>
    <div class="wtabs">
      <span class="wtab"><svg width="46" height="46" viewBox="0 0 46 46"><rect x="1" y="1" width="11" height="12" fill="#cfe6f7"/><rect x="1" y="32" width="11" height="13" fill="#cfe6f7"/><circle cx="21" cy="23" r="6" fill="#f6e89a" stroke="#d9a65c" stroke-width="2.500"/><rect x="34" y="17" width="10" height="12" fill="#fff" stroke="#8fcf6c" stroke-width="3"/></svg><b>Model</b><svg width="28" height="30" color="#b4daf5"><use href="#cross"/></svg></span>
      <svg class="wmore" width="24" height="15" color="#555"><use href="#chev"/></svg>
    </div>
    <div class="wbody">
      <div class="canvas">
        <svg class="edges" width="1758" height="1396" viewBox="2107 801 1758 1396">
          <defs><marker id="head" viewBox="0 0 28 24" refX="28" refY="12" markerWidth="28" markerHeight="24" markerUnits="userSpaceOnUse" orient="auto"><path d="M0 0l28 12L0 24z" fill="#6b6b6b"/></marker></defs>
          <g stroke="#858585" stroke-width="4">
            <path d="M2574 1399L2832 1444" marker-end="url(#head)"/><path d="M2947 1278L2962 1372" marker-end="url(#head)"/><path d="M3122 1470.500H3300" marker-end="url(#head)"/><path d="M3361 1551L3176 1725" marker-end="url(#head)"/><path d="M2750 1822.500H2928" marker-end="url(#head)"/><path d="M3218 1822.500H3396" marker-end="url(#head)"/>
          </g>
        </svg>
        <div class="node blue n1">mc_major_roads</div>
        <div class="node teal n2">Distance [value<br>or field]</div>
        <div class="node tool n3">Buffer</div>
        <div class="node green n4">mc_major_roa…</div>
        <div class="node blue n5">monroe_count…</div>
        <div class="node tool n6">Clip Layer</div>
        <div class="node green n7">monroe_count…</div>
        <span class="param">P</span>
        <div class="tbar"><strong>?</strong><svg width="20" height="24" viewBox="0 0 20 24"><path d="M16 3L5 12l11 9" fill="none" stroke="#555" stroke-width="5"/></svg><span>Show Toolbar</span></div>
      </div>
      <div class="vs"><svg width="22" height="12" color="#ccc"><use href="#chev" transform="rotate(180 11 6)"/></svg><svg width="22" height="12" color="#ccc"><use href="#chev"/></svg></div>
      <div class="hs"><svg width="12" height="22" viewBox="0 0 12 22"><path d="M10 1L2 11l8 10" fill="none" stroke="#ccc" stroke-width="3"/></svg><svg width="12" height="22" viewBox="0 0 12 22"><path d="M2 1l8 10-8 10" fill="none" stroke="#ccc" stroke-width="3"/></svg></div>
    </div>
  </section>
</div>
</body>
</html>
```
FILE: styles.css
```css
* { box-sizing: border-box; }
body { margin: 0; }
svg { display: block; flex: none; }
.defs { position: absolute; width: 0; height: 0; }
.app {
  position: relative; width: 4000px; height: 2250px; overflow: hidden;
  display: flex; flex-direction: column;
  background: #eaeaea; color: #222;
  font: 35px/39px "Open Sans", "Noto Sans", sans-serif;
  letter-spacing: -.03em; white-space: nowrap;
}

/* title bar */
.titlebar {
  position: relative; flex: none; height: 98px; background: #f8f8f8;
  display: grid; align-items: center; padding-left: 6px;
  grid-template-columns: 80px 84px 82px 68px 36px 70px 42px 92px 1210px 525px 1000px 82px 120px 104px 152px 108px 139px;
}
.cell { display: flex; justify-content: center; align-items: center; height: 98px; }
.undo { padding-top: 3px; }
.proj { justify-self: end; width: 80px; padding-left: 2px; color: #666; padding-top: 4px; }
.cmd {
  display: flex; align-items: center; gap: 15px; height: 74px; padding-left: 18px;
  border: 3px solid #a6a6a6; border-radius: 8px; background: #fafafa;
  color: #858585; font-style: italic; font-size: 34px;
}
.cmd span { padding-top: 3px; letter-spacing: -.025em; }
.signin { justify-self: end; width: 227px; padding-top: 4px; letter-spacing: -.018em; }
.avatar { width: 70px; height: 74px; border-radius: 50%; background: #cacaca; display: flex; align-items: center; justify-content: center; margin-left: -2px; }
.help { color: #a8a8a8; font-size: 42px; }
.close { padding-left: 9px; }
.progress { position: absolute; left: 1648px; top: 0; width: 706px; height: 4px; background: linear-gradient(90deg, #0070cc 141px, #e2e2e2 141px); }

/* ribbon tabs */
.tabs {
  flex: none; height: 80px; background: #f8f8f8; padding-left: 53px;
  display: flex; align-items: center; gap: 96px; font-size: 38px;
}
.tabs span { height: 78px; line-height: 82px; }
.tabs .on { font-weight: 600; color: #111; margin-left: 6px; padding: 0 2px; border-bottom: 9px solid #0070cc; font-size: 37.500px; }
.ctx {
  display: flex; gap: 96px; height: 78px; margin-left: 10px; padding: 0 44px 0 50px;
  background: #fff; border: 3px solid #e4e4e4; border-radius: 8px;
}
.tabs .ctx span { line-height: 78px; height: 72px; }
.ctx.two { margin-left: -36px; padding: 0 44px; }

/* ribbon */
.ribbon { position: relative; flex: none; height: 295px; background: #f8f8f8; border-bottom: 5px solid #c9c9cc; padding-top: 10px; display: flex; }
.group { flex: none; height: 270px; border-right: 3px solid #bdbdbd; display: flex; flex-direction: column; justify-content: space-between; }
.g-clip { width: 316px; padding-left: 12px; }
.g-model { width: 949px; padding-left: 27px; }
.g-view { width: 441px; padding-left: 15px; }
.g-mode { width: 265px; padding-left: 30px; }
.g-run { width: 511px; padding-left: 29px; }
.g-insert { width: 656px; padding-left: 23px; }
.g-group { width: 320px; padding-left: 15px; }
.tools { display: flex; height: 222px; }
.name { text-align: center; margin-left: -14px; line-height: 28px; color: #4a4a4a; font-size: 34px; }
.g-mode .name { margin-left: -30px; }
.g-run .name { margin-left: -29px; }
.g-insert .name { margin-left: -23px; }
.launch { display: flex; align-items: center; justify-content: flex-end; padding-right: 8px; gap: 415px; }
.big { display: flex; flex-direction: column; align-items: center; text-align: center; }
.big > svg:first-child { margin-bottom: 6px; }
.big .dd { margin-top: 16px; }
.off { color: #8f8f8f; }
.w100 { width: 100px; } .w118 { width: 118px; } .w122 { width: 122px; } .w126 { width: 126px; }
.w130 { width: 130px; } .w132 { width: 132px; } .w134 { width: 134px; } .w139 { width: 139px; }
.w140 { width: 140px; } .w141 { width: 141px; } .w160 { width: 160px; } .w204 { width: 204px; }
.w206 { width: 206px; } .w226 { width: 228px; } .w295 { width: 292px; }
.col { padding-left: 1px; }
.row { display: flex; align-items: center; gap: 9px; height: 74px; padding-bottom: 2px; }
.row .side { margin-left: 16px; }
.pairs { display: grid; grid-template-columns: 65px 65px; grid-auto-rows: 74px; place-items: center; padding-left: 9px; width: 140px; }
.collapse { margin: 250px 0 0 494px; }

/* work area */
.work { flex: 1; display: flex; padding: 20px 17px 19px 20px; gap: 22px; }
.contents { width: 933px; flex: none; background: #f8f8f8; border: 3px solid #d4d5da; border-radius: 8px; }
.phead { display: flex; align-items: center; height: 94px; padding: 0 17px 0 15px; }
.phead .ptitle { flex: 1; font-size: 45px; }
.phead svg { margin-left: 30px; }
.phead .pin { margin-left: 29px; }
.psearch { display: flex; align-items: center; height: 74px; padding: 0 6px 0 8px; gap: 23px; }
.psearch .box { flex: 1; height: 76px; border: 3px solid #8d8d8d; background: #fff; display: flex; align-items: center; padding: 0 18px 0 15px; color: #595959; font-style: italic; }
.box span { flex: 1; padding-top: 2px; }
.box svg + svg { margin-left: 34px; }
.views { display: flex; margin: 10px 0 0 41px; width: 656px; height: 123px; border-bottom: 6px solid #dedede; }
.views span { width: 93.700px; height: 123px; display: flex; justify-content: center; align-items: center; padding-bottom: 12px; }
.views .on { border-bottom: 12px solid #0073c0; padding-bottom: 0; }
.contents h2 { margin: 0; padding: 33px 0 0 41px; height: 107px; font-weight: 400; font-size: 41px; line-height: 54px; color: #444; }
.toc { list-style: none; margin: 0; padding: 0; color: #4a4a4a; }
.toc li { height: 75.400px; display: flex; align-items: center; }
.toc li span { padding-bottom: 2px; }
.toc .root { padding-left: 4px; gap: 14px; }
.toc .tw { width: 20px; margin-left: 37px; }
.item { margin-left: 7px; height: 75px; width: 861px; display: flex; align-items: center; gap: 16px; padding-left: 6px; }
.sel { background: #c6dcee; border: 3px solid #1b80c0; padding-left: 3px; letter-spacing: -.023em; }
.sym { padding-left: 82px; }
.sw { width: 59px; height: 50px; border: 3px solid #7b7b7b; }
.lilac { background: #9dbffb; } .cyan { background: #00c5ff; border-color: #16809f; } .sand { background: #fcecbb; }
.ln { width: 52px; height: 6px; margin-left: 3px; background: #b54aa3; }

.mapview { flex: 1; min-width: 0; display: flex; flex-direction: column; border-right: 3px solid #d2d3d8; border-bottom: 3px solid #d0d0d0; margin-left: -1px; }
.mtabs { display: flex; align-items: center; height: 76px; flex: none; border-bottom: 4px solid #d0d1d6; letter-spacing: -.022em; }
.mtab { height: 74px; display: flex; align-items: center; }
.mtab b { font-weight: 400; }
.mtab.on { width: 222px; padding-left: 15px; gap: 15px; background: #d0d1d6; color: #666; border-radius: 8px 8px 0 0; }
.mtab .x { margin-left: 12px; }
.cat { margin-left: 18px; gap: 17px; }
.tbl { margin-left: 94px; gap: 18px; }
.more { margin-left: auto; margin-right: 14px; }
.map { background: #fff; }
.shapes path { vector-effect: non-scaling-stroke; stroke-linejoin: round; }
.wet path { fill: #fcecbb; stroke: #9a978f; stroke-width: 3; }
.buf { fill: #a0c4ff; stroke: #6a6d73; stroke-width: 4; }
.clip path { fill: #00a0ff; stroke: #1a569f; stroke-width: 3; }
.hot path { fill: #00a0ff; stroke: #00e1ff; stroke-width: 9; }
.road { fill: none; stroke: #7840bf; stroke-width: 4; }

.status { flex: 1; display: flex; align-items: center; background: #f8f8f8; padding-left: 15px; overflow: hidden; }
.scale { width: 293px; height: 69px; border: 3px solid #8d8d8d; background: #fff; display: flex; align-items: center; justify-content: space-between; padding: 0 11px 0 16px; font-size: 34px; letter-spacing: -.055em; color: #111; }
.sep { width: 3px; height: 46px; background: #8f8f8f; margin-left: 12px; }
.s1 { margin-left: 17px; } .s2 { margin-left: 14px; } .s3 { margin-left: 15px; } .s4 { margin-left: 9px; } .s5 { margin-left: 8px; } .s6 { margin: 6px 13px 0 17px; }
.refresh { margin-left: auto; margin-right: 12px; }

/* floating model window */
.window {
  position: absolute; left: 2086px; top: 618px; width: 1853px; height: 1660px;
  border: 3px solid #c3c4c8; background: #eeeff1;
  box-shadow: 0 4px 44px rgba(0, 0, 0, .36);
  display: flex; flex-direction: column;
}
.wtitle { height: 87px; flex: none; background: #f8f8f8; display: flex; align-items: center; color: #4a4a4a; padding-left: 22px; letter-spacing: -.012em; }
.wtitle span { flex: 1; padding-top: 4px; }
.max { margin-right: 96px; } .wx { margin-right: 49px; }
.wtabs { height: 94px; flex: none; margin: 0 16px 0 17px; border-bottom: 7px solid #0070cc; display: flex; align-items: flex-end; }
.wtab { width: 254px; height: 69px; background: #0078d0; color: #fff; border-radius: 10px 10px 0 0; display: flex; align-items: center; padding: 6px 0 0 18px; gap: 16px; }
.wtab b { font-weight: 400; flex: 1; }
.wtab svg:last-child { margin-right: 19px; }
.wmore { margin: 0 17px 24px auto; }
.wbody { flex: none; width: 1812px; height: 1480px; margin: -1px 0 0 18px; background: #f1f1f1; border-right: 4px solid #d0d2d6; display: grid; grid-template: 1396px 1fr / 1758px 50px; }
.canvas { position: relative; background: #fafafa; font: 35px/43px "Liberation Sans", Arial, sans-serif; letter-spacing: 0; color: #111; }
.edges { position: absolute; left: 0; top: 0; }
.node { position: absolute; width: 291px; height: 197px; border-radius: 50%; display: flex; align-items: center; justify-content: center; text-align: center; }
.tool { border-radius: 34px; background: #f3e27c; }
.blue { background: #70adcd; } .teal { background: #52c0cd; } .green { background: #84cd7c; }
.n1 { left: 179px; top: 475px; } .n2 { left: 679px; top: 283px; } .n3 { left: 725px; top: 571px; }
.n4 { left: 1193px; top: 571px; } .n5 { left: 353px; top: 923px; } .n6 { left: 820px; top: 923px; } .n7 { left: 1289px; top: 923px; }
.param { position: absolute; left: 959px; top: 289px; font-size: 36px; color: #444; }
.tbar {
  position: absolute; right: 0; top: 6px; width: 310px; height: 101px; background: #ececec;
  display: flex; align-items: center; padding-left: 16px; color: #707070;
  font-family: "Open Sans", "Noto Sans", sans-serif; letter-spacing: -.035em;
}
.tbar strong { font-size: 50px; color: #555; font-weight: 600; }
.tbar svg { margin: 0 13px 0 23px; }
.vs { display: flex; flex-direction: column; justify-content: space-between; align-items: center; padding: 22px 0; }
.hs { height: 54px; display: flex; justify-content: space-between; align-items: center; padding: 0 21px 0 17px; }
```
